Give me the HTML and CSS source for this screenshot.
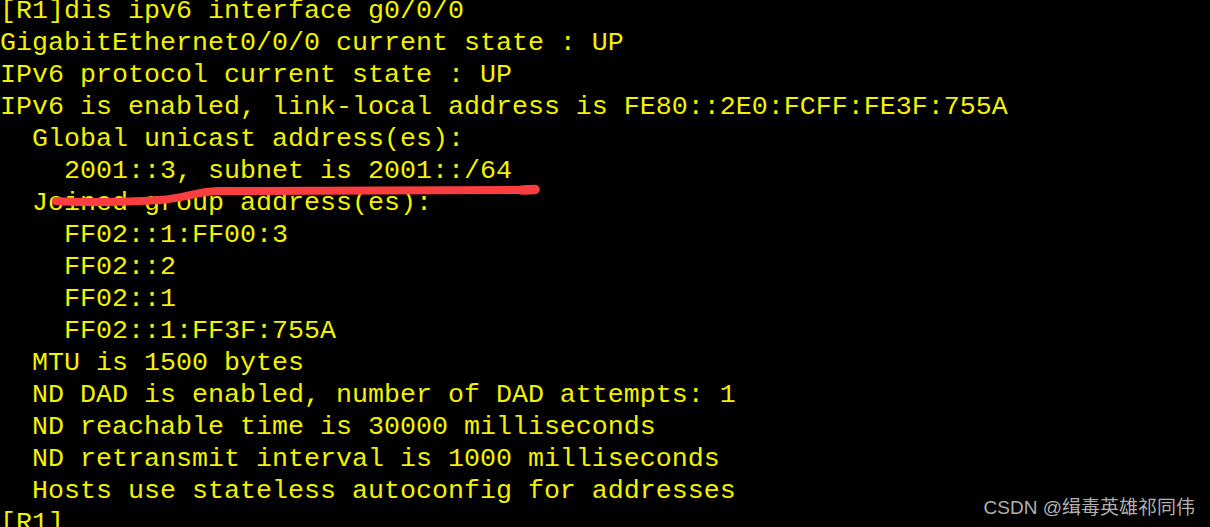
FILE: index.html
```html
<!DOCTYPE html>
<html>
<head>
<meta charset="utf-8">
<link rel="stylesheet" href="styles.css">
</head>
<body>
<div class="screen">
<pre class="term">[R1]dis ipv6 interface g0/0/0
GigabitEthernet0/0/0 current state : UP
IPv6 protocol current state : UP
IPv6 is enabled, link-local address is FE80::2E0:FCFF:FE3F:755A
  Global unicast address(es):
    2001::3, subnet is 2001::/64
  Joined group address(es):
    FF02::1:FF00:3
    FF02::2
    FF02::1
    FF02::1:FF3F:755A
  MTU is 1500 bytes
  ND DAD is enabled, number of DAD attempts: 1
  ND reachable time is 30000 milliseconds
  ND retransmit interval is 1000 milliseconds
  Hosts use stateless autoconfig for addresses
[R1]</pre>
<svg class="mark" width="1210" height="527" viewBox="0 0 1210 527">
  <path d="M56 201 C 80 203, 130 202, 160 200 C 185 198, 195 192, 218 191 L 525 190" fill="none" stroke="#fa3e40" stroke-width="8" stroke-linecap="round"/>
  <path d="M522 190 L 535 189.5" fill="none" stroke="#fa3e40" stroke-width="9.5" stroke-linecap="round"/>
</svg>
<div class="watermark">CSDN @缉毒英雄祁同伟</div>
</div>
</body>
</html>
```
FILE: styles.css
```css
html, body {
  margin: 0;
  padding: 0;
  background: #000;
}
.screen {
  position: relative;
  width: 1210px;
  height: 527px;
  overflow: hidden;
  background: #000;
}
.term {
  margin: -5px 0 0 0;
  padding: 0;
  font-family: "Liberation Mono", monospace;
  font-size: 26.67px;
  line-height: 32px;
  color: #f2f200;
  white-space: pre;
}
.mark {
  position: absolute;
  left: 0;
  top: 0;
}
.watermark {
  position: absolute;
  right: 15px;
  bottom: 8px;
  font-family: "Liberation Sans", "Noto Sans CJK SC", sans-serif;
  font-size: 19px;
  color: #b0b0b0;
}
```
